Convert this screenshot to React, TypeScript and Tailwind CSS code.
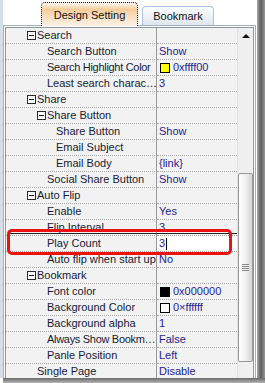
import React from "react";

type Row = {
  label: string;
  cat?: boolean;
  pad: string;
  v?: string;
  sw?: string;
  edit?: boolean;
  tight?: boolean;
};

const rows: Row[] = [
  { label: "Search", cat: true, pad: "pl-[21px]" },
  { label: "Search Button", pad: "pl-[41px]", v: "Show" },
  { label: "Search Highlight Color", pad: "pl-[41px]", v: "0xffff00", sw: "bg-[#ffff00]", tight: true },
  { label: "Least search charac…", pad: "pl-[41px]", v: "3" },
  { label: "Share", cat: true, pad: "pl-[21px]" },
  { label: "Share Button", cat: true, pad: "pl-[31px]" },
  { label: "Share Button", pad: "pl-[50px]", v: "Show" },
  { label: "Email Subject", pad: "pl-[50px]", v: "" },
  { label: "Email Body", pad: "pl-[50px]", v: "{link}" },
  { label: "Social Share Button", pad: "pl-[41px]", v: "Show" },
  { label: "Auto Flip", cat: true, pad: "pl-[21px]" },
  { label: "Enable", pad: "pl-[41px]", v: "Yes" },
  { label: "Flip Interval", pad: "pl-[41px]", v: "3" },
  { label: "Play Count", pad: "pl-[41px]", v: "3", edit: true },
  { label: "Auto flip when start up", pad: "pl-[41px]", v: "No" },
  { label: "Bookmark", cat: true, pad: "pl-[21px]" },
  { label: "Font color", pad: "pl-[41px]", v: "0x000000", sw: "bg-black" },
  { label: "Background Color", pad: "pl-[41px]", v: "0×ffffff", sw: "bg-white" },
  { label: "Background alpha", pad: "pl-[41px]", v: "1" },
  { label: "Always Show Bookm…", pad: "pl-[41px]", v: "False", tight: true },
  { label: "Panle Position", pad: "pl-[41px]", v: "Left" },
  { label: "Single Page", pad: "pl-[31px]", v: "Disable" },
];

function MinusBox() {
  return (
    <span className="mr-[1px] flex h-[9px] w-[9px] shrink-0 items-center justify-center border border-[#2a2a2a] bg-white">
      <span className="h-px w-[5px] bg-[#1a1a1a]" />
    </span>
  );
}

function GridRow({ r }: { r: Row }) {
  return (
    <div className="flex h-4 shrink-0">
      <div
        className={`flex w-[151px] shrink-0 items-center overflow-hidden whitespace-nowrap border-b border-r border-b-[#a8a8a8] border-r-[#9a9a9a] border-dotted [border-right-style:solid] bg-[#f2f2f2] text-[#151b36] ${r.pad}`}
      >
        {r.cat && <MinusBox />}
        <span className={`leading-[15px] ${r.tight ? "tracking-[-0.3px]" : ""}`}>{r.label}</span>
      </div>
      <div
        className={`flex w-[80px] shrink-0 items-center overflow-hidden whitespace-nowrap border-b border-dotted border-[#a8a8a8] pl-[2px] text-[#1f1f8f] ${
          r.edit ? "bg-white" : "bg-[#f2f2f2]"
        }`}
      >
        {r.sw && <span className={`ml-[1px] mr-[3px] h-[10px] w-[10px] shrink-0 border border-black ${r.sw}`} />}
        <span className="leading-[15px]">{r.v}</span>
        {r.edit && <span className="ml-[1px] h-[12px] w-px bg-black" />}
      </div>
    </div>
  );
}

function ScrollBar() {
  return (
    <div className="flex w-[16px] shrink-0 flex-col border-l border-[#e2e2e2] bg-[#efefef]">
      <div className="flex h-4 shrink-0 items-center justify-center">
        <span className="h-0 w-0 border-x-[4px] border-b-[4px] border-x-transparent border-b-[#111]" />
      </div>
      <div className="mt-[129px] flex h-[189px] w-[15px] shrink-0 flex-col items-center justify-center gap-[1px] rounded-[2px] border border-[#9a9a9a] bg-gradient-to-r from-[#fdfdfd] via-[#f1f1f1] to-[#d6d6d6]">
        <span className="h-px w-[7px] bg-[#8a8a8a]" />
        <span className="h-px w-[7px] bg-[#8a8a8a]" />
        <span className="h-px w-[7px] bg-[#8a8a8a]" />
        <span className="h-px w-[7px] bg-[#8a8a8a]" />
      </div>
    </div>
  );
}

export default function App() {
  return (
    <div className="relative h-[383px] w-[265px] overflow-hidden bg-white font-['Liberation_Sans',Arial,sans-serif] text-[11px]">
      <div className="flex h-[378px]">
        <div className="w-[3px] shrink-0 bg-[#d6dee8]" />
        <div className="flex w-[253px] shrink-0 flex-col">
          {/* tabs */}
          <div className="flex h-[25px] shrink-0 items-end bg-white pl-[38px]">
            <div className="relative z-10 -mb-px flex h-[24px] w-[97px] items-center justify-center rounded-t-[4px] border-x border-t border-dotted border-[#222] bg-[linear-gradient(to_bottom,#fffaf4_0%,#f6cc98_28%,#f9dcbb_55%,#fdf2e6_100%)] pt-[2px] text-[#111]">
              Design Setting
            </div>
            <div className="ml-[4px] flex h-[19px] w-[72px] items-center justify-center rounded-t-[4px] border-x border-t border-[#a9c2e2] bg-gradient-to-b from-white to-[#dfe6ef] text-[#111]">
              Bookmark
            </div>
          </div>
          {/* frame */}
          <div className="flex min-h-0 flex-1 border-x border-t border-[#9fb0c4] p-px pb-0">
            <div className="flex min-h-0 flex-1 overflow-hidden border-x border-t border-[#8d96a3]">
              <div className="flex w-[231px] shrink-0 flex-col overflow-hidden">
                {rows.map((r, i) => (
                  <GridRow key={i} r={r} />
                ))}
              </div>
              <ScrollBar />
            </div>
          </div>
        </div>
        <div className="w-px shrink-0 bg-white" />
        <div className="w-[8px] shrink-0 bg-gradient-to-r from-[#a5a5a5] via-[#5e5e5e] to-[#9a9a9a]" />
      </div>
      <div className="ml-[3px] h-[5px] bg-gradient-to-b from-[#6a6a6a] to-[#b5b5b5]" />

      {/* annotation overlay */}
      <div className="absolute left-[10px] top-[233px] h-px w-[227px] bg-[#222]" />
      <div className="absolute left-[7px] top-[229px] h-[26px] w-[225px] rounded-[5px] border-[3px] border-[#ee1111]" />
    </div>
  );
}
